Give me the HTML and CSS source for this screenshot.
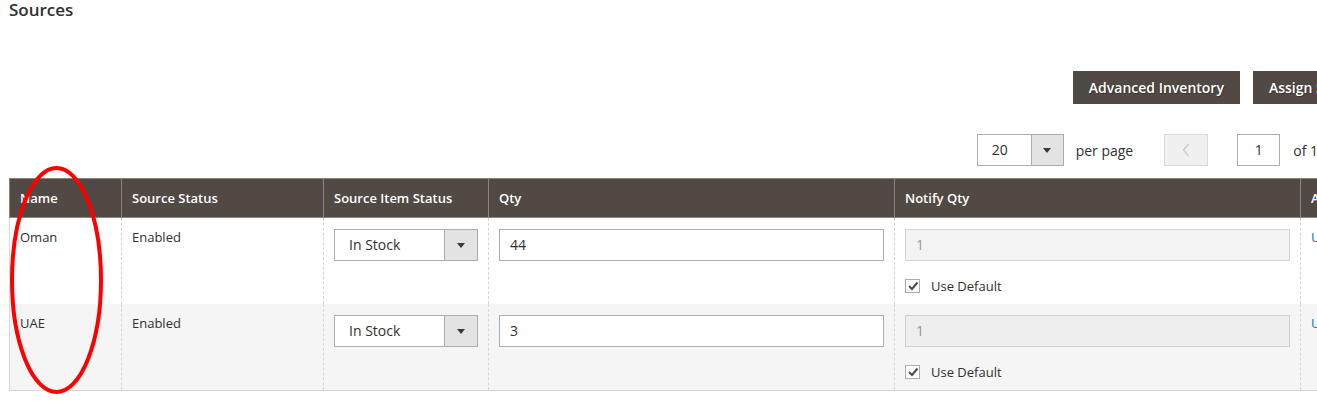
FILE: index.html
```html
<!DOCTYPE html>
<html lang="en">
<head>
<meta charset="utf-8">
<title>Sources</title>
<link rel="stylesheet" href="styles.css">
</head>
<body>
<div class="page">
  <h2 class="title">Sources</h2>
  <div class="actions">
    <button class="btn">Advanced Inventory</button>
    <button class="btn">Assign Sources</button>
  </div>
  <div class="pager">
    <div class="perpage"><span class="pp-val">20</span><span class="pp-arrow"><i class="tri"></i></span></div>
    <span class="pp-label">per page</span>
    <button class="pg-btn prev"><svg width="8" height="14" viewBox="0 0 8 14"><polyline points="6.5,1 1.5,7 6.5,13" fill="none" stroke="#c7c7c7" stroke-width="1.2"/></svg></button>
    <span class="pg-input">1</span>
    <span class="pg-of">of 1</span>
    <button class="pg-btn next"><svg width="8" height="14" viewBox="0 0 8 14"><polyline points="1.5,1 6.5,7 1.5,13" fill="none" stroke="#c7c7c7" stroke-width="1.2"/></svg></button>
  </div>
  <table class="grid">
    <colgroup>
      <col class="c-name"><col class="c-status"><col class="c-item"><col class="c-qty"><col class="c-notify"><col class="c-action">
    </colgroup>
    <thead>
      <tr><th>Name</th><th>Source Status</th><th>Source Item Status</th><th>Qty</th><th>Notify Qty</th><th>Action</th></tr>
    </thead>
    <tbody>
      <tr>
        <td class="txt">Oman</td>
        <td class="txt">Enabled</td>
        <td><div class="sel"><span class="sel-val">In Stock</span><span class="sel-arrow"><i class="tri"></i></span></div></td>
        <td><div class="inp">44</div></td>
        <td><div class="inp dis">1</div><div class="usedef"><span class="cb"><svg width="12" height="12" viewBox="0 0 12 12"><polyline points="2,6 5,9 10.5,2.5" fill="none" stroke="#514943" stroke-width="2"/></svg></span><span class="cb-label">Use Default</span></div></td>
        <td class="txt"><a class="lnk" href="#">Unassign</a></td>
      </tr>
      <tr class="alt">
        <td class="txt">UAE</td>
        <td class="txt">Enabled</td>
        <td><div class="sel"><span class="sel-val">In Stock</span><span class="sel-arrow"><i class="tri"></i></span></div></td>
        <td><div class="inp">3</div></td>
        <td><div class="inp dis">1</div><div class="usedef"><span class="cb"><svg width="12" height="12" viewBox="0 0 12 12"><polyline points="2,6 5,9 10.5,2.5" fill="none" stroke="#514943" stroke-width="2"/></svg></span><span class="cb-label">Use Default</span></div></td>
        <td class="txt"><a class="lnk" href="#">Unassign</a></td>
      </tr>
    </tbody>
  </table>
</div>
<svg class="annot" width="1317" height="412" viewBox="0 0 1317 412"><ellipse cx="56.5" cy="280" rx="44.5" ry="112" fill="none" stroke="#ff0000" stroke-width="4"/></svg>
</body>
</html>
```
FILE: styles.css
```css
* { box-sizing: border-box; }
html, body { margin: 0; padding: 0; }
body {
  font-family: "Open Sans", sans-serif;
  color: #303030;
  background: #fff;
  width: 1317px;
  height: 412px;
  overflow: hidden;
  position: relative;
}
.page { width: 1376px; margin-left: 9px; }
.title {
  margin: 0;
  font-size: 17px;
  line-height: 20px;
  font-weight: 600;
  color: #303030;
}
.actions {
  display: flex;
  justify-content: flex-end;
  gap: 13px;
  margin-top: 51px;
}
.btn {
  font-family: inherit;
  font-size: 14px;
  font-weight: 600;
  line-height: 19px;
  padding: 6px 15px;
  border: 1px solid #514943;
  background: #514943;
  color: #fff;
  text-shadow: 1px 1px 1px rgba(0,0,0,.3);
  border-radius: 0;
  margin: 0;
}
.pager {
  display: flex;
  justify-content: flex-end;
  align-items: center;
  margin-top: 30px;
  height: 32px;
  font-size: 14px;
}
.perpage {
  display: flex;
  width: 87px;
  height: 32px;
  border: 1px solid #adadad;
  background: #fff;
}
.pp-val { flex: 1; padding-left: 14px; line-height: 30px; }
.pp-arrow, .sel-arrow {
  width: 32px;
  border-left: 1px solid #adadad;
  background: #e3e3e3;
  display: flex;
  align-items: center;
  justify-content: center;
}
.tri {
  display: block;
  width: 0; height: 0;
  border-left: 4px solid transparent;
  border-right: 4px solid transparent;
  border-top: 5px solid #41362f;
}
.pp-label { margin-left: 12px; }
.pg-btn {
  width: 44px;
  height: 32px;
  border: 1px solid #dadada;
  background: #f0f0f0;
  display: flex;
  align-items: center;
  justify-content: center;
  padding: 0;
  margin: 0;
}
.prev { margin-left: 31px; }
.pg-input {
  margin-left: 29px;
  width: 43px;
  height: 32px;
  border: 1px solid #adadad;
  text-align: center;
  line-height: 30px;
}
.pg-of { margin-left: 13px; }
.next { margin-left: 23px; }

.grid {
  width: 1373px;
  table-layout: fixed;
  border-collapse: collapse;
  margin-top: 12px;
}
.c-name { width: 112px; }
.c-status { width: 202px; }
.c-item { width: 165px; }
.c-qty { width: 406px; }
.c-notify { width: 406px; }
.c-action { width: 82px; }
.grid th {
  background: #514943;
  color: #fff;
  font-size: 13px;
  font-weight: 600;
  line-height: 18px;
  text-align: left;
  padding: 10px;
  border: 1px solid #8a837f;
  white-space: nowrap;
  overflow: hidden;
}
.grid td {
  vertical-align: top;
  padding: 11px 10px 10px;
  font-size: 13px;
  line-height: 16px;
  border-left: 1px dashed #d6d6d6;
  border-right: 1px dashed #d6d6d6;
}
.grid td:first-child { border-left: 1px solid #d6d6d6; }
.grid tr.alt td { background: #f5f5f5; border-bottom: 1px solid #d6d6d6; }
.grid td.txt { padding-top: 11px; }
.sel {
  display: flex;
  width: 144px;
  height: 32px;
  border: 1px solid #adadad;
  background: #fff;
  font-size: 14px;
}
.sel-val { flex: 1; padding-left: 14px; line-height: 30px; }
.sel-arrow { width: 33px; }
.inp {
  width: 100%;
  height: 32px;
  border: 1px solid #adadad;
  background: #fff;
  font-size: 14px;
  line-height: 30px;
  padding-left: 10px;
}
.inp.dis {
  background: #e9e9e9;
  opacity: .5;
}
.usedef {
  display: flex;
  align-items: center;
  margin-top: 17px;
  height: 16px;
}
.cb {
  width: 15px;
  height: 14px;
  border: 1px solid #adadad;
  background: #fff;
  display: flex;
  align-items: center;
  justify-content: center;
}
.cb-label { margin-left: 11px; font-size: 13px; }
.lnk { color: #007bdb; text-decoration: none; }
.annot {
  position: absolute;
  left: 0;
  top: 0;
  pointer-events: none;
}
```
